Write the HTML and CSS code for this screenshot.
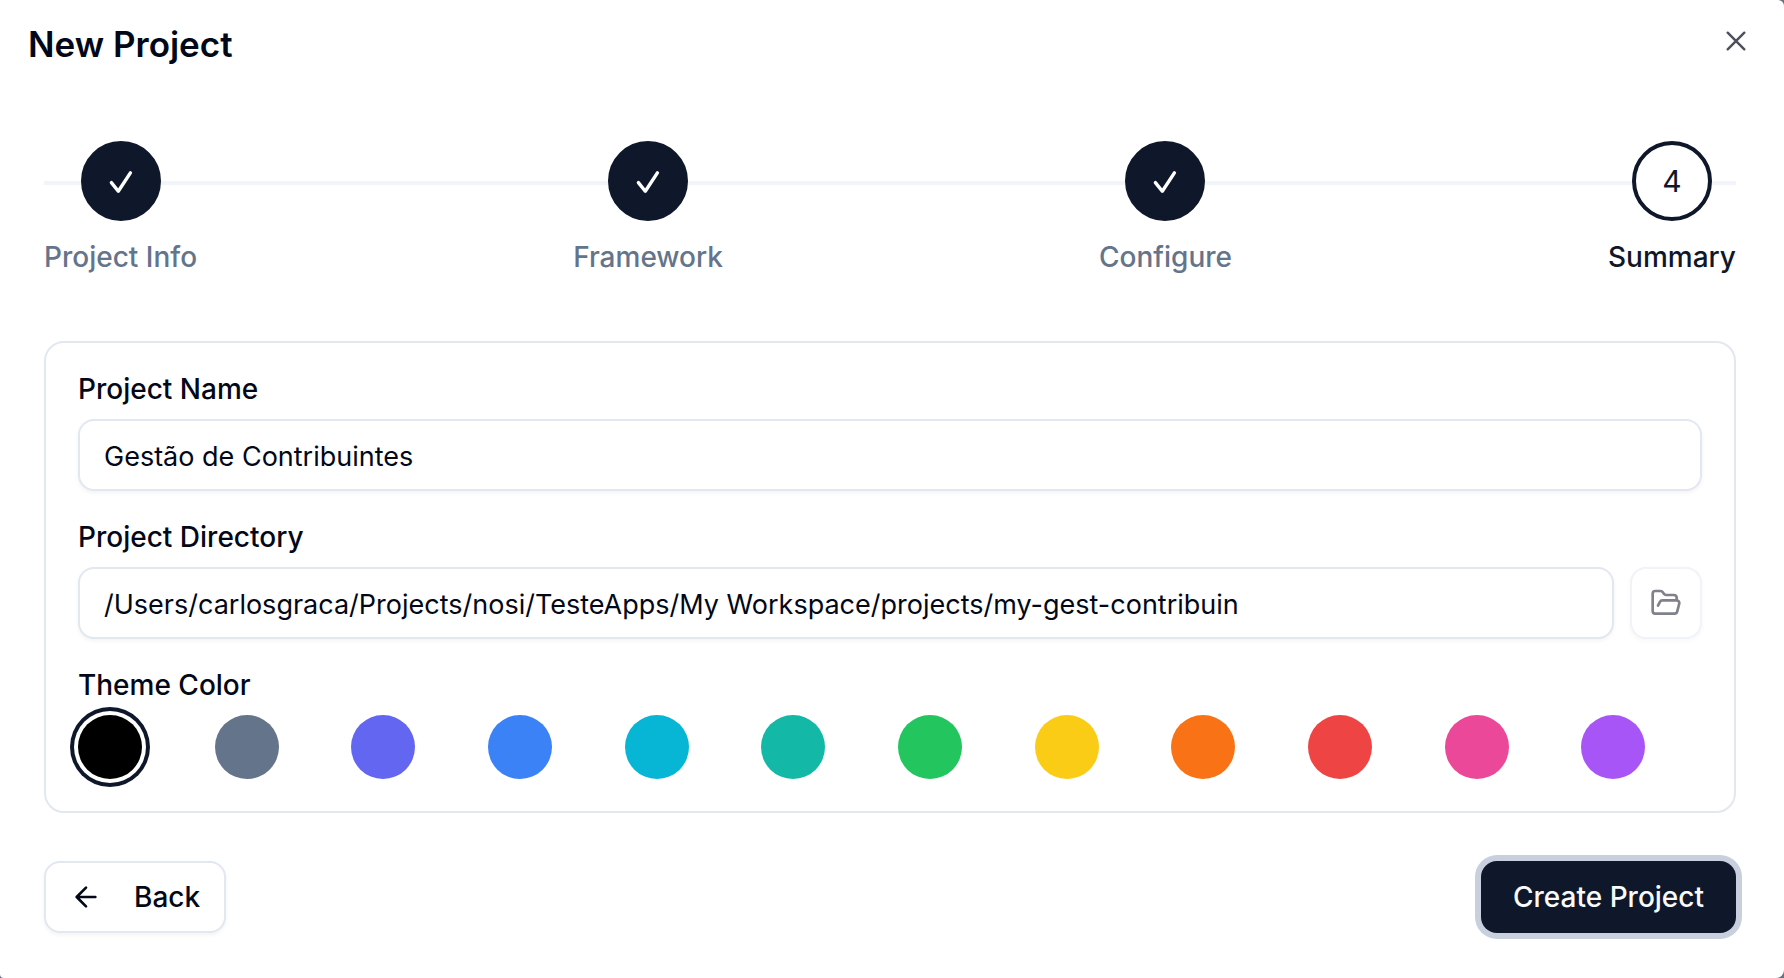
FILE: index.html
```html
<!DOCTYPE html>
<html lang="en">
<head>
<meta charset="utf-8">
<meta name="viewport" content="width=device-width, initial-scale=1">
<title>New Project</title>
<link rel="stylesheet" href="styles.css">
</head>
<body>
<main class="dialog" role="dialog" aria-labelledby="dialog-title">
  <header class="dialog-header">
    <h1 class="dialog-title" id="dialog-title">New Project</h1>
    <button class="close" type="button" aria-label="Close">
      <svg class="icon" viewBox="0 0 15 15" aria-hidden="true"><path d="M3.6 3.6 11.4 11.4M11.4 3.6 3.6 11.4" fill="none" stroke="currentColor" stroke-width="1.15" stroke-linecap="round"/></svg>
    </button>
  </header>

  <form class="wizard">
    <ol class="steps">
      <li class="step">
        <span class="step-mark done"><svg class="icon" viewBox="0 0 32 32" aria-hidden="true"><path class="tick" d="M6.4 17.6 13.3 26.2 25.4 7.9"/></svg></span>
        <span class="step-label">Project Info</span>
      </li>
      <li class="step">
        <span class="step-mark done"><svg class="icon" viewBox="0 0 32 32" aria-hidden="true"><path class="tick" d="M6.4 17.6 13.3 26.2 25.4 7.9"/></svg></span>
        <span class="step-label">Framework</span>
      </li>
      <li class="step">
        <span class="step-mark done"><svg class="icon" viewBox="0 0 32 32" aria-hidden="true"><path class="tick" d="M6.4 17.6 13.3 26.2 25.4 7.9"/></svg></span>
        <span class="step-label">Configure</span>
      </li>
      <li class="step current" aria-current="step">
        <span class="step-mark">4</span>
        <span class="step-label">Summary</span>
      </li>
    </ol>

    <section class="card">
      <div class="field">
        <label class="label" for="project-name">Project Name</label>
        <input class="input" id="project-name" type="text" value="Gestão de Contribuintes">
      </div>
      <div class="field">
        <label class="label" for="project-dir">Project Directory</label>
        <div class="input-row">
          <input class="input" id="project-dir" type="text" value="/Users/carlosgraca/Projects/nosi/TesteApps/My Workspace/projects/my-gest-contribuin">
          <button class="button browse" type="button" aria-label="Browse for directory" disabled>
            <svg class="icon" viewBox="0 0 24 24" aria-hidden="true"><path class="line" d="m6 14 1.45-2.9A2 2 0 0 1 9.24 10H20a2 2 0 0 1 1.94 2.5l-1.55 6a2 2 0 0 1-1.94 1.5H4a2 2 0 0 1-2-2V5c0-1.1.9-2 2-2h3.93a2 2 0 0 1 1.66.9l.82 1.2a2 2 0 0 0 1.66.9H18a2 2 0 0 1 2 2v2"/></svg>
          </button>
        </div>
      </div>
      <div class="field" role="radiogroup" aria-labelledby="theme-label">
        <span class="label" id="theme-label">Theme Color</span>
        <div class="swatches">
          <input class="swatch black" type="radio" name="theme" aria-label="Black" checked>
          <input class="swatch slate" type="radio" name="theme" aria-label="Slate">
          <input class="swatch indigo" type="radio" name="theme" aria-label="Indigo">
          <input class="swatch blue" type="radio" name="theme" aria-label="Blue">
          <input class="swatch cyan" type="radio" name="theme" aria-label="Cyan">
          <input class="swatch teal" type="radio" name="theme" aria-label="Teal">
          <input class="swatch green" type="radio" name="theme" aria-label="Green">
          <input class="swatch yellow" type="radio" name="theme" aria-label="Yellow">
          <input class="swatch orange" type="radio" name="theme" aria-label="Orange">
          <input class="swatch red" type="radio" name="theme" aria-label="Red">
          <input class="swatch pink" type="radio" name="theme" aria-label="Pink">
          <input class="swatch purple" type="radio" name="theme" aria-label="Purple">
        </div>
      </div>
    </section>

    <footer class="actions">
      <button class="button back" type="button">
        <svg class="icon" viewBox="0 0 24 24" aria-hidden="true"><path class="line" d="m12 19-7-7 7-7M19 12H5"/></svg>
        Back
      </button>
      <button class="button create" type="button">Create Project</button>
    </footer>
  </form>
</main>
</body>
</html>
```
FILE: styles.css
```css
* {
  box-sizing: border-box;
}

body {
  margin: 0;
  background: #6b7280;
  color: #020817;
  font-family: Inter, "Liberation Sans", sans-serif;
  font-size: 28px;
  line-height: 40px;
}

button,
input {
  font: inherit;
  color: inherit;
}

.dialog {
  min-height: 100vh;
  background: #fff;
  border-radius: 0 6px 8px 4px;
}

.dialog-header {
  display: flex;
  align-items: flex-start;
  justify-content: space-between;
  padding: 25px 32px 0 28px;
}

.dialog-title {
  margin: 0;
  font-size: 35px;
  font-weight: 600;
  line-height: 38px;
}

.close {
  display: flex;
  padding: 0;
  border: 0;
  background: none;
  opacity: 0.7;
}

.icon {
  width: 32px;
  height: 32px;
  flex: none;
}

.line,
.tick {
  fill: none;
  stroke: currentColor;
  stroke-width: 2;
  stroke-linecap: round;
  stroke-linejoin: round;
}

.tick {
  stroke-width: 3.4;
}

.wizard {
  padding: 78px 48px 45px 44px;
}

.steps {
  display: flex;
  justify-content: space-between;
  margin: 0 0 64px;
  padding: 0;
  list-style: none;
  background: linear-gradient(#f1f5f9, #f1f5f9) 0 40px / 100% 4px no-repeat;
}

.step {
  display: flex;
  flex-direction: column;
  align-items: center;
  gap: 16px;
  color: #64748b;
  font-weight: 500;
}

.step-mark {
  display: flex;
  align-items: center;
  justify-content: center;
  width: 80px;
  height: 80px;
  border: 4px solid #0f172a;
  border-radius: 50%;
  background: #fff;
  font-size: 30px;
  font-weight: 400;
}

.step-mark.done {
  background: #0f172a;
  color: #fff;
}

.current {
  color: #0f172a;
}

.card {
  display: flex;
  flex-direction: column;
  gap: 32px;
  padding: 32px;
  border: 2px solid #e2e8f0;
  border-radius: 20px;
}

.field {
  display: flex;
  flex-direction: column;
  gap: 16px;
}

.label {
  font-weight: 500;
  line-height: 28px;
}

.input,
.button {
  height: 72px;
  border: 2px solid #e2e8f0;
  border-radius: 16px;
  background: #fff;
  box-shadow: 0 2px 4px rgb(0 0 0 / 5%);
}

.input {
  width: 100%;
  min-width: 0;
  padding: 2px 24px 0;
  font-size: 27px;
}

.input-row {
  display: flex;
  gap: 16px;
}

.button {
  display: flex;
  align-items: center;
  justify-content: center;
  font-weight: 500;
}

.browse {
  flex: none;
  width: 72px;
  padding: 0;
  opacity: 0.5;
}

.swatches {
  display: grid;
  grid-template-columns: repeat(12, 1fr);
  gap: 16px;
}

.swatch {
  appearance: none;
  width: 64px;
  height: 64px;
  margin: 0;
  border-radius: 50%;
}

.swatch:checked {
  box-shadow: 0 0 0 4px #fff, 0 0 0 8px #0f172a;
}

.black { background: #000; }
.slate { background: #64748b; }
.indigo { background: #6366f1; }
.blue { background: #3b82f6; }
.cyan { background: #06b6d4; }
.teal { background: #14b8a6; }
.green { background: #22c55e; }
.yellow { background: #facc15; }
.orange { background: #f97316; }
.red { background: #ef4444; }
.pink { background: #ec4899; }
.purple { background: #a855f7; }

.actions {
  display: flex;
  align-items: center;
  justify-content: space-between;
  margin-top: 48px;
}

.back {
  gap: 32px;
  padding: 0 24px;
}

.create {
  padding: 0 32px;
  border: 0;
  background: #0f172a;
  color: #f8fafc;
  box-shadow: 0 0 0 6px #c8d0de;
}
```
